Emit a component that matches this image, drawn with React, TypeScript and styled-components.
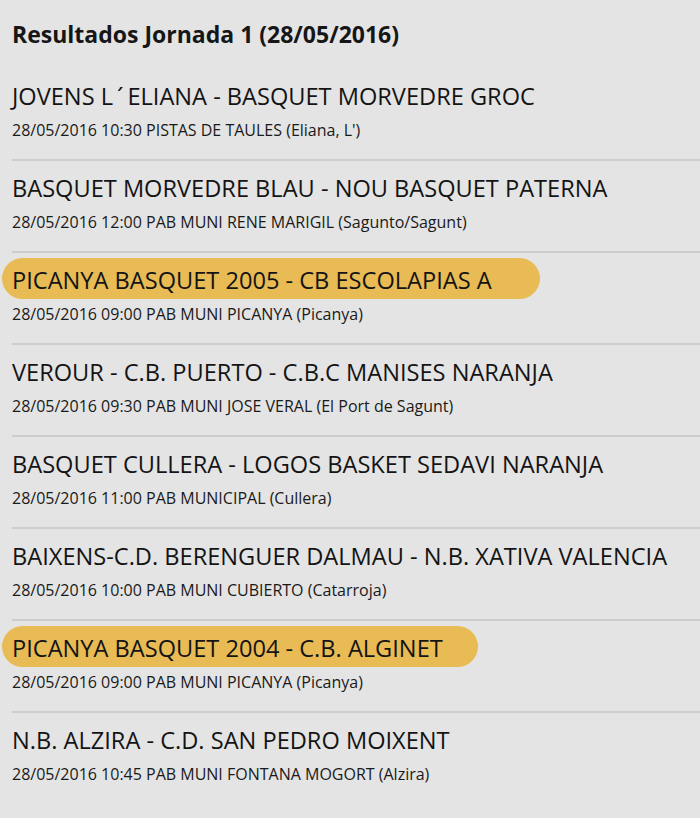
import React from 'react'
import styled, { createGlobalStyle } from 'styled-components'

const GlobalStyle = createGlobalStyle`
  html, body {
    margin: 0;
    padding: 0;
    background: #e4e4e4;
  }
  body {
    font-family: 'Open Sans', 'Noto Sans', sans-serif;
    color: #1c1c1c;
  }
`

const Wrapper = styled.div`
  display: flex;
  flex-direction: column;
  padding: 18px 0 0 12px;
  width: 700px;
  height: 818px;
  box-sizing: border-box;
`
const Heading = styled.h1`
  font-size: 23px;
  font-weight: 700;
  line-height: 32px;
  margin: 0 0 18px;
  color: #161616;
`
const List = styled.div`
  display: flex;
  flex-direction: column;
`
const Match = styled.div`
  display: flex;
  flex-direction: column;
  align-items: flex-start;
  padding: 11px 0 18px;
  border-top: ${({ $first }: MatchProps) => ($first ? 'none' : '2px solid #cdcdcd')};
  margin-top: ${({ $first }: MatchProps) => ($first ? '1px' : '0')};
`
const Teams = styled.div`
  font-size: 23.6px;
  line-height: 37px;
  font-weight: 400;
  color: #141414;
  white-space: nowrap;
  margin: -6px 0 0 -10px;
  padding: 4px ${({ $pad }: TeamsProps) => ($pad ? `${$pad}px` : '0')} 0 10px;
  border-radius: 21px;
  background: ${({ $pad }) => ($pad ? '#e8bb55' : 'transparent')};
`
const Info = styled.div`
  font-size: 16px;
  line-height: 22px;
  margin-top: 4px;
  color: #1a1a1a;
`

const matches = [
  { teams: 'JOVENS L\u2009´\u2009ELIANA - BASQUET MORVEDRE GROC', info: '28/05/2016 10:30 PISTAS DE TAULES (Eliana, L\')' },
  { teams: 'BASQUET MORVEDRE BLAU - NOU BASQUET PATERNA', info: '28/05/2016 12:00 PAB MUNI RENE MARIGIL (Sagunto/Sagunt)' },
  { teams: 'PICANYA BASQUET 2005 - CB ESCOLAPIAS A', info: '28/05/2016 09:00 PAB MUNI PICANYA (Picanya)', pad: 48 },
  { teams: 'VEROUR - C.B. PUERTO - C.B.C MANISES NARANJA', info: '28/05/2016 09:30 PAB MUNI JOSE VERAL (El Port de Sagunt)' },
  { teams: 'BASQUET CULLERA - LOGOS BASKET SEDAVI NARANJA', info: '28/05/2016 11:00 PAB MUNICIPAL (Cullera)' },
  { teams: 'BAIXENS-C.D. BERENGUER DALMAU - N.B. XATIVA VALENCIA', info: '28/05/2016 10:00 PAB MUNI CUBIERTO (Catarroja)' },
  { teams: 'PICANYA BASQUET 2004 - C.B. ALGINET', info: '28/05/2016 09:00 PAB MUNI PICANYA (Picanya)', pad: 35 },
  { teams: 'N.B. ALZIRA - C.D. SAN PEDRO MOIXENT', info: '28/05/2016 10:45 PAB MUNI FONTANA MOGORT (Alzira)' },
]

const App = () => {
  return (
    <Wrapper>
      <GlobalStyle />
      <Heading>Resultados Jornada 1 (28/05/2016)</Heading>
      <List>
        {matches.map((m, i) => (
          <Match key={i} $first={i === 0}>
            <Teams $pad={m.pad}>{m.teams}</Teams>
            <Info>{m.info}</Info>
          </Match>
        ))}
      </List>
    </Wrapper>
  )
}

type MatchProps = {
  $first?: boolean
}
type TeamsProps = {
  $pad?: number
}

export default App
